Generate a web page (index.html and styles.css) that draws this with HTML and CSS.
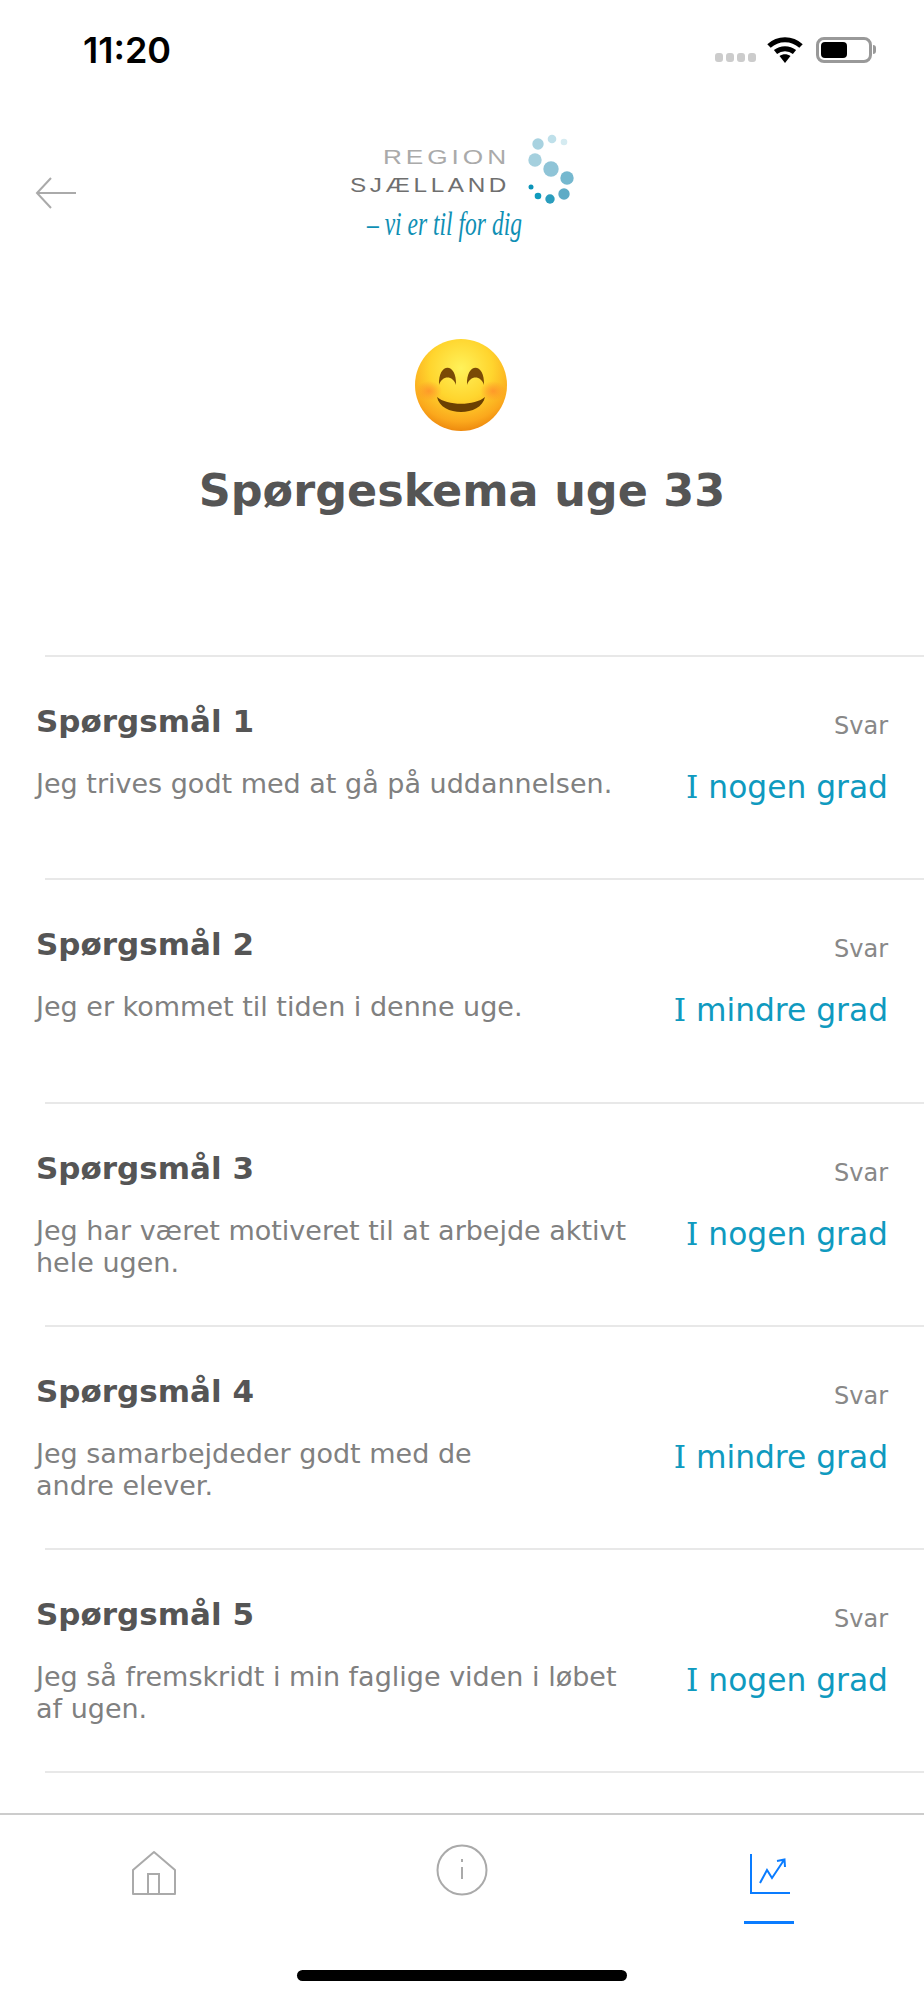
FILE: index.html
```html
<!DOCTYPE html>
<html lang="da">
<head>
<meta charset="UTF-8">
<meta name="viewport" content="width=device-width, initial-scale=1.0">
<title>Spørgeskema uge 33</title>
<link rel="stylesheet" href="styles.css">
</head>
<body>
<div class="screen">

    <!-- iOS status bar -->
    <div class="status-bar">
        <span class="clock">11:20</span>
        <div class="status-icons">
            <div class="signal"><i></i><i></i><i></i><i></i></div>
            <svg class="wifi" width="36" height="27" viewBox="0 0 36 27">
                <path d="M2 10 C11 1.5 25 1.5 34 10" fill="none" stroke="#000" stroke-width="5"/>
                <path d="M8.5 16 C14 11.5 22 11.5 27.5 16" fill="none" stroke="#000" stroke-width="5"/>
                <path d="M12.5 20 C16 17.5 20 17.5 23.5 20 L18 27 Z" fill="#000"/>
            </svg>
            <div class="battery"><div class="battery-level"></div></div>
            <div class="battery-nub"></div>
        </div>
    </div>

    <!-- header with back arrow and logo -->
    <div class="top-nav">
        <svg class="back-arrow" width="42" height="32" viewBox="0 0 42 32">
            <path d="M16 1 L2 16 L16 31 M2 16 L41 16" fill="none" stroke="#aaa" stroke-width="2"/>
        </svg>
        <svg class="logo" width="240" height="126" viewBox="0 0 240 126">
            <text class="logo-region" x="41" y="34" textLength="127" lengthAdjust="spacingAndGlyphs">REGION</text>
            <text class="logo-sjaelland" x="8" y="62" textLength="160" lengthAdjust="spacingAndGlyphs">SJÆLLAND</text>
            <circle cx="196" cy="14" r="5.7" fill="#a8d2e0"/>
            <circle cx="210" cy="9" r="4.3" fill="#bfe0ea"/>
            <circle cx="222" cy="12" r="3.3" fill="#d5ebf1"/>
            <circle cx="193" cy="30" r="6.7" fill="#a5d0de"/>
            <circle cx="209" cy="39" r="7.7" fill="#8fc4d7"/>
            <circle cx="225" cy="48" r="6.7" fill="#75b8cf"/>
            <circle cx="222" cy="64" r="5.7" fill="#5eabc6"/>
            <circle cx="208" cy="69" r="4.7" fill="#2a9dbd"/>
            <circle cx="196" cy="66" r="3.3" fill="#109bbd"/>
            <circle cx="189" cy="57" r="2.5" fill="#0a93b8"/>
            <text class="logo-slogan" x="25" y="105" textLength="155" lengthAdjust="spacingAndGlyphs">– vi er til for dig</text>
        </svg>
    </div>

    <!-- title -->
    <div class="hero">
        <svg class="smiley" width="92" height="92" viewBox="0 0 92 92">
            <defs>
                <radialGradient id="faceFill" cx="50%" cy="32%" r="68%">
                    <stop offset="0%" stop-color="#fff25a"/>
                    <stop offset="50%" stop-color="#ffd52e"/>
                    <stop offset="85%" stop-color="#fba81c"/>
                    <stop offset="100%" stop-color="#ee8a0e"/>
                </radialGradient>
                <radialGradient id="cheek">
                    <stop offset="0%" stop-color="#ff8a2a" stop-opacity="0.75"/>
                    <stop offset="100%" stop-color="#ff8a2a" stop-opacity="0"/>
                </radialGradient>
            </defs>
            <circle cx="46" cy="46" r="46" fill="url(#faceFill)"/>
            <ellipse cx="14" cy="52" rx="13" ry="10" fill="url(#cheek)"/>
            <ellipse cx="78" cy="52" rx="13" ry="10" fill="url(#cheek)"/>
            <path d="M24 46 C23 23 42 23 41 46 C38 36 27 36 24 46 Z" fill="#7a4a06"/>
            <path d="M52 46 C51 23 70 23 69 46 C66 36 55 36 52 46 Z" fill="#7a4a06"/>
            <path d="M22 58 C32 67 60 67 70 58 C68 68 57 73 46 73 C35 73 24 68 22 58 Z" fill="#6b3f02"/>
        </svg>
        <h1 class="page-title">Spørgeskema uge 33</h1>
    </div>

    <!-- questions -->
    <div class="question-list">
        <div class="question-row">
            <div class="question-text">
                <h2>Spørgsmål 1</h2>
                <p>Jeg trives godt med at gå på uddannelsen.</p>
            </div>
            <div class="answer">
                <span class="answer-label">Svar</span>
                <span class="answer-value"><span class="answer-initial">I</span> nogen grad</span>
            </div>
        </div>
        <div class="question-row">
            <div class="question-text">
                <h2>Spørgsmål 2</h2>
                <p>Jeg er kommet til tiden i denne uge.</p>
            </div>
            <div class="answer">
                <span class="answer-label">Svar</span>
                <span class="answer-value"><span class="answer-initial">I</span> mindre grad</span>
            </div>
        </div>
        <div class="question-row">
            <div class="question-text">
                <h2>Spørgsmål 3</h2>
                <p>Jeg har været motiveret til at arbejde aktivt hele ugen.</p>
            </div>
            <div class="answer">
                <span class="answer-label">Svar</span>
                <span class="answer-value"><span class="answer-initial">I</span> nogen grad</span>
            </div>
        </div>
        <div class="question-row">
            <div class="question-text">
                <h2>Spørgsmål 4</h2>
                <p>Jeg samarbejdeder godt med de<br>andre elever.</p>
            </div>
            <div class="answer">
                <span class="answer-label">Svar</span>
                <span class="answer-value"><span class="answer-initial">I</span> mindre grad</span>
            </div>
        </div>
        <div class="question-row">
            <div class="question-text">
                <h2>Spørgsmål 5</h2>
                <p>Jeg så fremskridt i min faglige viden i løbet af ugen.</p>
            </div>
            <div class="answer">
                <span class="answer-label">Svar</span>
                <span class="answer-value"><span class="answer-initial">I</span> nogen grad</span>
            </div>
        </div>
    </div>

    <!-- bottom tabs -->
    <div class="tab-bar">
        <div class="tab tab-home">
            <svg width="46" height="46" viewBox="0 0 46 46">
                <path d="M23 2 L44 20 L44 44 L2 44 L2 20 Z" fill="none" stroke="#aaa" stroke-width="2" stroke-linejoin="round"/>
                <path d="M17 44 L17 24 L28 24 L28 44" fill="none" stroke="#aaa" stroke-width="2"/>
            </svg>
        </div>
        <div class="tab tab-info">
            <svg width="52" height="52" viewBox="0 0 52 52">
                <circle cx="26" cy="26" r="24.5" fill="none" stroke="#aaa" stroke-width="2"/>
                <path d="M26 23 L26 35 M26 15 L26 18" fill="none" stroke="#aaa" stroke-width="2"/>
            </svg>
        </div>
        <div class="tab tab-active">
            <svg width="42" height="42" viewBox="0 0 42 42">
                <path d="M2 1 L2 40 L41 40" fill="none" stroke="#0a7cff" stroke-width="2"/>
                <path d="M11 30 L18 17 L23 25 L35 7 M28 8 L35.5 6.5 L36 14" fill="none" stroke="#0a7cff" stroke-width="2"/>
            </svg>
        </div>
    </div>

    <div class="home-bar"></div>
</div>
</body>
</html>
```

FILE: styles.css
```css
body {
    margin: 0;
    background-color: #ffffff;
    font-family: "DejaVu Sans", sans-serif;
}
.screen {
    width: 924px;
    height: 2000px;
    display: flex;
    flex-direction: column;
    overflow: hidden;
}

/* status bar */
.status-bar {
    height: 100px;
    box-sizing: border-box;
    padding: 30px 48px 0 83px;
    display: flex;
    justify-content: space-between;
    align-items: flex-start;
}
.clock {
    font-family: Inter, sans-serif;
    font-weight: 600;
    font-size: 36px;
    line-height: 41px;
    color: #000000;
}
.status-icons {
    display: flex;
    align-items: center;
    margin-top: 6px;
}
.signal {
    display: flex;
    gap: 3px;
    margin-top: 16px;
    margin-right: 11px;
}
.signal i {
    width: 8px;
    height: 9px;
    border-radius: 3px;
    background-color: #cccccc;
}
.wifi {
    margin-right: 13px;
}
.battery {
    width: 56px;
    height: 26px;
    box-sizing: border-box;
    border: 3px solid #999999;
    border-radius: 8px;
    padding: 2px;
}
.battery-level {
    width: 26px;
    height: 100%;
    background-color: #000000;
    border-radius: 4px;
}
.battery-nub {
    width: 3px;
    height: 9px;
    background-color: #999999;
    border-radius: 0 3px 3px 0;
    margin-left: 1px;
}

/* header */
.top-nav {
    height: 175px;
    box-sizing: border-box;
    padding: 30px 0 0 35px;
    display: grid;
    grid-template-columns: 307px 240px;
    align-items: start;
}
.back-arrow {
    margin-top: 47px;
}
.logo {
    overflow: visible;
}
.logo-region,
.logo-sjaelland {
    font-family: "Liberation Sans", sans-serif;
    font-size: 20px;
    letter-spacing: 3px;
}
.logo-region {
    fill: #aaaaaa;
}
.logo-sjaelland {
    fill: #6f6f6f;
}
.logo-slogan {
    font-family: "Liberation Serif", serif;
    font-style: italic;
    font-size: 34px;
    fill: #0f8fb4;
}

/* title */
.hero {
    height: 380px;
    box-sizing: border-box;
    padding-top: 64px;
    display: flex;
    flex-direction: column;
    align-items: center;
}
.smiley {
    display: block;
    margin-right: 3px;
}
.page-title {
    margin: 32px 0 0;
    font-size: 44.5px;
    line-height: 56px;
    font-weight: bold;
    color: #555555;
}

/* question rows */
.question-list {
    margin-left: 45px;
    border-bottom: 2px solid #e8e8e8;
}
.question-row {
    height: 223.3px;
    box-sizing: border-box;
    border-top: 2px solid #e8e8e8;
    padding: 44px 36px 0 0;
    display: flex;
    justify-content: space-between;
}
.question-text {
    margin-left: -9px;
    width: 610px;
}
.question-text h2 {
    margin: 0;
    font-size: 31px;
    line-height: 40px;
    font-weight: bold;
    color: #555555;
}
.question-text p {
    margin: 27px 0 0;
    font-size: 27px;
    line-height: 32px;
    color: #808080;
}
.answer {
    display: flex;
    flex-direction: column;
    align-items: flex-end;
    padding-top: 1px;
}
.answer-label {
    font-size: 24px;
    line-height: 32px;
    margin-top: 8px;
    color: #888888;
}
.answer-value {
    font-size: 31.3px;
    line-height: 40px;
    margin-top: 25px;
    color: #0f9abf;
}
.answer-initial {
    font-family: "DejaVu Serif", serif;
}

/* tabs */
.tab-bar {
    margin-top: 40px;
    height: 110px;
    border-top: 2px solid #cccccc;
    display: grid;
    grid-template-columns: repeat(3, 1fr);
}
.tab {
    display: flex;
    justify-content: center;
    align-items: flex-start;
}
.tab-home {
    padding-top: 35px;
}
.tab-info {
    padding-top: 29px;
}
.tab-active {
    position: relative;
    padding-top: 38px;
}
.tab-active::after {
    content: "";
    position: absolute;
    left: 128px;
    top: 106px;
    width: 50px;
    height: 3px;
    background-color: #0a7cff;
}
.home-bar {
    width: 330px;
    height: 11px;
    margin: 45px auto 0;
    border-radius: 6px;
    background-color: #000000;
}
```
